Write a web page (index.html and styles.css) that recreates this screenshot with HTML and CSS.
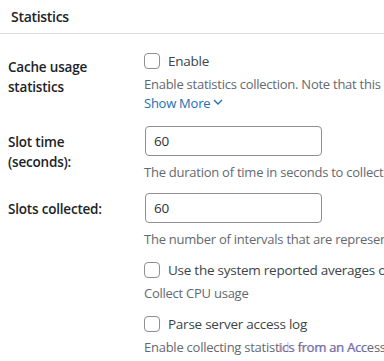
FILE: index.html
```html
<!DOCTYPE html>
<html lang="en">
<head>
	<meta charset="UTF-8"/>
	<title>Statistics</title>
	<link rel="stylesheet" href="styles.css">
</head>
<body>
	<!-- Section title -->
	<div class="section-head">
		<h2>Statistics</h2>
	</div>
	<div class="form">
		<div class="row">
			<div class="label">Cache usage statistics</div>
			<div class="field">
				<label class="check-line"><span class="box"></span>Enable</label>
				<div class="desc">Enable statistics collection. Note that this can affect the performance of the server.</div>
				<a class="more" href="#">Show More<svg width="10" height="6" viewBox="0 0 10 6"><polyline points="1,1 5,5 9,1" fill="none" stroke="#2271b1" stroke-width="1.4"/></svg></a>
			</div>
		</div>
		<div class="row">
			<div class="label">Slot time (seconds):</div>
			<div class="field">
				<div class="input">60</div>
				<div class="desc">The duration of time in seconds to collect statistics for each slot.</div>
			</div>
		</div>
		<div class="row">
			<div class="label">Slots collected:</div>
			<div class="field">
				<div class="input">60</div>
				<div class="desc">The number of intervals that are represented in the graph.</div>
			</div>
		</div>
		<div class="row">
			<div class="label"></div>
			<div class="field">
				<label class="check-line"><span class="box"></span>Use the system reported averages of CPU usage</label>
				<div class="desc">Collect CPU usage</div>
			</div>
		</div>
		<div class="row">
			<div class="label"></div>
			<div class="field">
				<label class="check-line"><span class="box"></span>Parse server access log</label>
				<div class="desc">Enable collecting statistics from an Access log file.<span class="ghost">Ids from an Acc</span></div>
			</div>
		</div>
	</div>
</body>
</html>
```

FILE: styles.css
```css
	/* Page base */
	body {
		margin: 0;
		background: #fff;
		font-family: "Open Sans", "Liberation Sans", sans-serif;
		font-size: 13px;
		color: #3c434a;
		overflow: hidden;
		white-space: nowrap;
	}
	/* Title bar with divider */
	.section-head {
		height: 33px;
		border-bottom: 1px solid #dcdcde;
		display: flex;
		align-items: center;
		padding-left: 11px;
	}
	.section-head h2 {
		margin: 0;
		font-size: 14px;
		font-weight: 600;
		letter-spacing: -0.3px;
		color: #1d2327;
	}
	.form {
		padding: 17px 0 0 8px;
	}
	.row {
		display: grid;
		grid-template-columns: 136px 1fr;
	}
	.row + .row {
		margin-top: 11px;
	}
	.label {
		padding-top: 6px;
		line-height: 20px;
		font-size: 13.5px;
		font-weight: 600;
		letter-spacing: -0.2px;
		color: #1d2327;
		white-space: normal;
		width: 110px;
	}
	.field {
		line-height: 19px;
		letter-spacing: -0.25px;
	}
	.check-line {
		display: flex;
		align-items: center;
		gap: 8px;
		height: 20px;
		font-size: 13.5px;
		color: #3c434a;
	}
	/* Custom checkbox square */
	.box {
		width: 14px;
		height: 14px;
		border: 1px solid #8c8f94;
		border-radius: 4px;
		background: #fff;
	}
	.desc {
		position: relative;
		margin-top: 4px;
		color: #646970;
	}
	.more {
		display: flex;
		align-items: center;
		gap: 3px;
		padding-bottom: 2px;
		color: #2271b1;
		text-decoration: none;
	}
	.more svg {
		margin-top: -3px;
	}
	/* Text input look */
	.input {
		box-sizing: border-box;
		width: 177px;
		height: 30px;
		margin-left: 1px;
		border: 1px solid #8c8f94;
		border-radius: 4px;
		padding: 0 8px;
		line-height: 28px;
		font-size: 13.5px;
		color: #2c3338;
	}
	.input + .desc {
		margin-top: 7px;
	}
	/* Faint overlapping label near the bottom */
	.ghost {
		position: absolute;
		left: 134px;
		top: 0;
		color: rgba(140, 110, 230, 0.5);
	}
```
